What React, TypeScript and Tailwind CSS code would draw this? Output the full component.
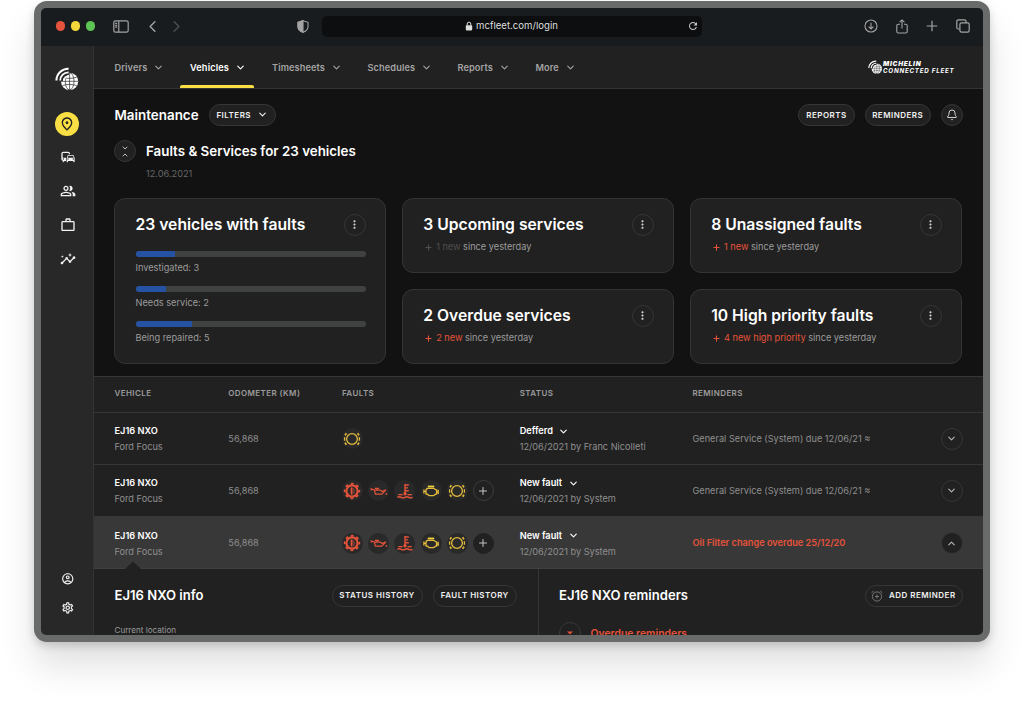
import React from "react";
import {
  ChevronDown,
  ChevronLeft,
  ChevronRight,
  ChevronUp,
  Plus,
  Bell,
} from "lucide-react";
import {
  MdOutlineCommute,
  MdOutlinePeopleAlt,
  MdWorkOutline,
  MdInsights,
  MdOutlineAccountCircle,
  MdOutlineSettings,
  MdOutlinePlace,
  MdMoreVert,
  MdRefresh,
} from "react-icons/md";

type FaultKind = "brake" | "oil" | "temp" | "engine" | "pads";

interface VehicleRow {
  plate: string;
  model: string;
  odometer: string;
  faults: FaultKind[];
  status: string;
  statusBy: string;
  reminder: string;
  active?: boolean;
}

const NAV_ITEMS = [
  { label: "Drivers", width: "w-[75.5px]" },
  { label: "Vehicles", width: "w-[82px]", active: true },
  { label: "Timesheets", width: "w-[95.5px]" },
  { label: "Schedules", width: "w-[90px]" },
  { label: "Reports", width: "w-[78px]" },
  { label: "More", width: "w-[60px]" },
];

const PROGRESS = [
  { label: "Investigated: 3", width: 39.5 },
  { label: "Needs service: 2", width: 30 },
  { label: "Being repaired: 5", width: 56.5 },
];

const ALL_FAULTS: FaultKind[] = ["brake", "oil", "temp", "engine", "pads"];

const ROWS: VehicleRow[] = [
  {
    plate: "EJ16 NXO",
    model: "Ford Focus",
    odometer: "56,868",
    faults: ["pads"],
    status: "Defferd",
    statusBy: "12/06/2021 by Franc Nicolleti",
    reminder: "General Service (System) due 12/06/21 ≈",
  },
  {
    plate: "EJ16 NXO",
    model: "Ford Focus",
    odometer: "56,868",
    faults: ALL_FAULTS,
    status: "New fault",
    statusBy: "12/06/2021 by System",
    reminder: "General Service (System) due 12/06/21 ≈",
  },
  {
    plate: "EJ16 NXO",
    model: "Ford Focus",
    odometer: "56,868",
    faults: ALL_FAULTS,
    status: "New fault",
    statusBy: "12/06/2021 by System",
    reminder: "Oil Filter change overdue 25/12/20",
    active: true,
  },
];

function FleetLogo({ className, hole }: { className: string; hole: string }) {
  return (
    <svg viewBox="0 0 24 24" className={className} fill="none">
      <circle cx="14.6" cy="14.3" r="8.6" fill="#fff" />
      <g stroke={hole} strokeWidth="0.7">
        <ellipse cx="14.6" cy="14.3" rx="4.4" ry="8.6" />
        <path d="M14.6 5.7v17.2M6 14.3h17.2M7.5 10.2c4 1.6 10.2 1.6 14.2 0M7.5 18.6c4-1.6 10.2-1.6 14.2 0" />
      </g>
      <path d="M5.6 14.3A8.6 8.6 0 0 1 13.8 5.6" stroke={hole} strokeWidth="4.6" />
      <path d="M1.4 13.4A11.8 11.8 0 0 1 13.6 1.8" stroke="#fff" strokeWidth="2" />
      <path d="M5.2 13.6A8.2 8.2 0 0 1 13.6 5.4" stroke="#fff" strokeWidth="1.8" />
      <path d="M9 13.8A4.6 4.6 0 0 1 13.6 9.2" stroke="#fff" strokeWidth="1.6" />
    </svg>
  );
}

function FaultIcon({ kind }: { kind: FaultKind }) {
  const red = "#e4533a";
  const yellow = "#e3bb3d";
  if (kind === "brake") {
    return (
      <svg viewBox="0 0 18 18" className="h-[18px] w-[18px]" fill="none" stroke={red}>
        <circle cx="9" cy="9" r="5.6" strokeWidth="2.1" />
        <circle cx="9" cy="9" r="7.3" strokeWidth="1.8" strokeDasharray="2.8 2.933" strokeDashoffset="1.4" />
        <path d="M8.6 5.5v7" strokeWidth="1.8" />
        <path d="M10 6.4c.9.4 1 1 1 1.600v2c0 .6-.1 1.200-1 1.600" strokeWidth="0.7" />
      </svg>
    );
  }
  if (kind === "oil") {
    return (
      <svg viewBox="0 0 18 18" className="h-[18px] w-[18px]" fill="none" stroke={red} strokeWidth="1.2">
        <path d="M1.2 8.400V6.800l3.200 1.300M4.400 8.100h6l1.600 1.400 4-1.700-4.200 4.400H5.400z" />
        <path d="M4.800 6.400h4.200M7 6.400v1.700" />
        <path d="M16.400 11.200v1.600" strokeWidth="1.500" />
      </svg>
    );
  }
  if (kind === "temp") {
    return (
      <svg viewBox="0 0 18 18" className="h-[18px] w-[18px]" fill="none" stroke={red} strokeWidth="1.400">
        <path d="M9 2v9.500M9 3h3.800M9 5.900h3M9 8.800h3.800" />
        <circle cx="9" cy="11.800" r="1.700" fill={red} stroke="none" />
        <path d="M2.200 12.600h3.300l1 .5M11.500 13.100l1-.5h3.300M1.400 15.300c1.200-.8 2.500-.8 3.800 0s2.500.8 3.800 0 2.500-.8 3.800 0 2.600.8 3.800 0" />
      </svg>
    );
  }
  if (kind === "engine") {
    return (
      <svg viewBox="0 0 18 18" className="h-[18px] w-[18px]" fill="none" stroke={yellow} strokeWidth="1.300">
        <path d="M5.800 4.500h6.400" stroke="#f5d73b" strokeWidth="1.800" />
        <path d="M5.400 6.300h6.200l2.200 1.500h.8v4.400h-1.200L11.800 13.600H7L5.200 12H4V7.800z" strokeLinejoin="round" />
        <path d="M1.900 7.400v4M16.200 7.800v4.200M2 9.400h2M14.400 10h1.600" />
      </svg>
    );
  }
  return (
    <svg viewBox="0 0 18 18" className="h-[18px] w-[18px]" fill="none" stroke={yellow}>
      <circle cx="9" cy="9" r="5.400" strokeWidth="1.300" />
      <path
        d="M3.400 3.300L2 5.400M3.400 14.700L2 12.600M14.600 3.300L16 5.400M14.600 14.700l1.400-2.100"
        strokeWidth="1.700"
      />
      <path d="M1.600 7.300v3.400M16.400 7.300v3.400" strokeWidth="1.300" />
    </svg>
  );
}

function Pill({ children, className = "" }: { children: React.ReactNode; className?: string }) {
  return (
    <button
      type="button"
      className={`flex h-[22px] shrink-0 items-center justify-center rounded-full border border-[#363636] bg-[#212121] pb-[1px] text-[8px] font-semibold tracking-[0.06em] whitespace-nowrap text-[#f0f0f0] ${className}`}
    >
      {children}
    </button>
  );
}

function RoundButton({ children, className = "" }: { children: React.ReactNode; className?: string }) {
  return (
    <button
      type="button"
      className={`flex h-[22px] w-[22px] shrink-0 items-center justify-center rounded-full border border-[#363636] ${className}`}
    >
      {children}
    </button>
  );
}

function BrowserBar() {
  return (
    <div className="flex h-[38px] shrink-0 items-center bg-[#181c1f] pb-[2px] pl-[14.500px] text-[#a3a3a3]">
      <div className="flex w-[57px] gap-[5.500px]">
        <span className="h-[9.500px] w-[9.500px] rounded-full bg-[#e5533d]" />
        <span className="h-[9.500px] w-[9.500px] rounded-full bg-[#f5d73b]" />
        <span className="h-[9.500px] w-[9.500px] rounded-full bg-[#5dc553]" />
      </div>
      <svg viewBox="0 0 16 13" className="h-[13px] w-4" fill="none" stroke="currentColor" strokeWidth="1.200">
        <rect x="0.800" y="0.800" width="14.400" height="11.400" rx="1.800" />
        <path d="M5.800 1v11M2.200 3.400h2M2.200 5.300h2M2.200 7.200h2" />
      </svg>
      <ChevronLeft className="ml-[14.500px] h-[19px] w-[19px]" strokeWidth={1.800} />
      <ChevronRight className="ml-[5px] h-[19px] w-[19px] text-[#4c4f51]" strokeWidth={1.800} />
      <svg viewBox="0 0 12 13" className="ml-[111px] h-[13px] w-3" fill="none" stroke="currentColor" strokeWidth="1.100">
        <path d="M6 .7l5 1.600v4.400c0 2.600-2 4.400-5 5.600-3-1.200-5-3-5-5.600V2.300z" />
        <path d="M6 .7v11.600c-3-1.200-5-3-5-5.600V2.300z" fill="currentColor" />
      </svg>
      <div className="ml-[13px] flex h-[21px] w-[380px] items-center rounded-[5px] bg-[#0c0e0f]">
        <svg viewBox="0 0 8 10" className="ml-[143px] h-[10px] w-2 text-[#dedede]" fill="none">
          <rect x="0.800" y="4.200" width="6.400" height="5.200" rx="0.800" fill="currentColor" />
          <path d="M2.200 4.500V3a1.800 1.800 0 0 1 3.600 0v1.500" stroke="currentColor" strokeWidth="1" />
        </svg>
        <span className="ml-[3px] w-[211px] text-[9.600px] text-[#dedede]">mcfleet.com/login</span>
        <MdRefresh className="h-[12px] w-[12px] text-[#c9c9c9]" />
      </div>
      <svg viewBox="0 0 14 14" className="ml-[162px] h-[14px] w-[14px]" fill="none" stroke="currentColor" strokeWidth="1.100">
        <circle cx="7" cy="7" r="6" />
        <path d="M7 3.800v6M4.600 7.600L7 10l2.400-2.400" />
      </svg>
      <svg viewBox="0 0 12 15" className="ml-[17.500px] h-[15px] w-3" fill="none" stroke="currentColor" strokeWidth="1.100">
        <path d="M4 5.300H2.200A1.400 1.400 0 0 0 .8 6.700v5.900A1.400 1.400 0 0 0 2.200 14h7.600a1.400 1.400 0 0 0 1.400-1.400V6.700a1.400 1.400 0 0 0-1.400-1.400H8M6 9.500V1M3.600 3.200L6 .9l2.400 2.300" />
      </svg>
      <svg viewBox="0 0 12 12" className="ml-[18.500px] h-3 w-3" stroke="currentColor" strokeWidth="1.200">
        <path d="M6 .8v10.400M.8 6h10.400" />
      </svg>
      <svg viewBox="0 0 14 14" className="ml-[17.500px] h-[14px] w-[14px]" fill="none" stroke="currentColor" strokeWidth="1.200">
        <rect x="3.900" y="3.900" width="9.300" height="9.300" rx="1.600" />
        <path d="M3.700 10H2.300A1.500 1.500 0 0 1 .8 8.500V2.300A1.500 1.500 0 0 1 2.300.8h6.200A1.500 1.500 0 0 1 10 2.300v1.400" />
      </svg>
    </div>
  );
}

function Sidebar() {
  return (
    <aside className="flex w-[53px] shrink-0 flex-col items-center border-r border-[#343434] bg-[#282828] text-[#f2f2f2]">
      <FleetLogo className="mt-[21px] h-6 w-6" hole="#282828" />
      <div className="mt-[20.500px] flex h-6 w-6 items-center justify-center rounded-full bg-[#f9df43] text-[#212121]">
        <MdOutlinePlace className="h-[16px] w-[16px]" />
      </div>
      <nav className="mt-[13.500px] ml-[1px] flex flex-col gap-[18px]">
        <MdOutlineCommute className="h-4 w-4" />
        <MdOutlinePeopleAlt className="h-4 w-4" />
        <MdWorkOutline className="h-4 w-4" />
        <MdInsights className="h-4 w-4" />
      </nav>
      <div className="mt-auto mb-[21px] ml-[1px] flex flex-col gap-[15.500px]">
        <MdOutlineAccountCircle className="h-[13.500px] w-[13.500px]" />
        <MdOutlineSettings className="h-[13.500px] w-[13.500px]" />
      </div>
    </aside>
  );
}

function TopNav() {
  return (
    <header className="flex h-[43px] shrink-0 items-stretch justify-between border-b border-[#343434] bg-[#212121] pl-[20.500px]">
      <nav className="flex">
        {NAV_ITEMS.map((item) => (
          <div
            key={item.label}
            className={`relative flex shrink-0 items-center pt-[1.500px] ${item.width} ${
              item.active ? "text-white" : "text-[#a3a3a3]"
            }`}
          >
            <span
              className={`text-[9.200px] font-semibold ${item.active ? "tracking-[0.015em]" : "tracking-[0.012em]"}`}
            >
              {item.label}
            </span>
            <ChevronDown className="ml-[6px] h-[11px] w-[11px]" strokeWidth={2.400} />
            {item.active && (
              <span className="absolute -left-[10.500px] bottom-0 h-[3px] w-[74px] rounded-t-[2px] bg-[#f9df43]" />
            )}
          </div>
        ))}
      </nav>
      <div className="mr-[27px] flex items-center gap-[1px] pt-[1px]">
        <FleetLogo className="h-[14.500px] w-[14.500px]" hole="#212121" />
        <div className="w-[73px] text-white italic">
          <p className="text-[6.500px] leading-[6.500px] font-black tracking-[0.115em]">MICHELIN</p>
          <p className="text-[6.200px] leading-[6.500px] font-bold tracking-[0.125em] whitespace-nowrap">CONNECTED FLEET</p>
        </div>
      </div>
    </header>
  );
}

function CardTitle({ children }: { children: React.ReactNode }) {
  return (
    <div className="flex items-center justify-between">
      <h3 className="text-[15.700px] leading-[22px] font-semibold text-white">{children}</h3>
      <RoundButton className="text-[#d0d0d0]">
        <MdMoreVert className="h-[13px] w-[13px]" />
      </RoundButton>
    </div>
  );
}

function StatCard({ title, change, muted }: { title: string; change: string; muted?: boolean }) {
  return (
    <section className="h-[75.500px] rounded-[11px] border border-[#343434] bg-[#212121] pt-[15px] pr-[19.500px] pl-[20.500px]">
      <CardTitle>{title}</CardTitle>
      <p className="mt-[4.500px] flex items-center text-[9.200px] leading-[14px] text-[#9b9b9b]">
        <span className={`flex items-center ${muted ? "text-[#4f4f4f]" : "text-[#e4533a]"}`}>
          <Plus className="mr-[3px] ml-[0.800px] h-[9px] w-[9px]" strokeWidth={2.800} />
          {change}
        </span>
        <span className="ml-[2.500px]">since yesterday</span>
      </p>
    </section>
  );
}

function Summary() {
  return (
    <section className="h-[287px] shrink-0 bg-[#121212] pt-[15px] pr-[21px] pl-5">
      <div className="-mr-[0.700px] flex items-center">
        <h1 className="w-[95px] pl-[0.500px] text-[13.400px] font-semibold text-white">Maintenance</h1>
        <Pill className="w-[66.500px] gap-[6px]">
          FILTERS
          <ChevronDown className="h-[11px] w-[11px]" strokeWidth={2.500} />
        </Pill>
        <div className="ml-auto flex gap-[10px]">
          <Pill className="w-[56.500px]">REPORTS</Pill>
          <Pill className="w-[66px]">REMINDERS</Pill>
          <RoundButton className="bg-[#212121] text-[#d0d0d0]">
            <Bell className="h-[12px] w-[12px]" strokeWidth={2} />
          </RoundButton>
        </div>
      </div>
      <div className="mt-[14px] flex">
        <RoundButton className="flex-col bg-[#212121] text-[#bdbdbd]">
          <ChevronDown className="-mb-px h-[8px] w-[8px]" strokeWidth={3} />
          <ChevronUp className="h-[8px] w-[8px]" strokeWidth={3} />
        </RoundButton>
        <div className="ml-[10px]">
          <h2 className="text-[13.350px] leading-[22px] font-semibold text-white">Faults &amp; Services for 23 vehicles</h2>
          <p className="mt-[4.500px] text-[9.200px] leading-[14px] text-[#666]">12.06.2021</p>
        </div>
      </div>
      <div className="mt-[17px] grid grid-cols-3 grid-rows-2 gap-x-[15.500px] gap-y-[15.500px]">
        <section className="row-span-2 rounded-[11px] border border-[#343434] bg-[#212121] pt-[15px] pr-[19.500px] pl-[20.500px]">
          <CardTitle>23 vehicles with faults</CardTitle>
          <div className="mt-[15.500px] flex flex-col gap-[10px]">
            {PROGRESS.map((bar) => (
              <div key={bar.label} className="h-[25.200px]">
                <div className="h-[5.500px] overflow-hidden rounded-full bg-[#404141]">
                  <div className="h-full bg-[#2552a3]" style={{ width: bar.width }} />
                </div>
                <p className="mt-[4px] text-[9.200px] leading-[14px] text-[#9b9b9b]">{bar.label}</p>
              </div>
            ))}
          </div>
        </section>
        <StatCard title="3 Upcoming services" change="1 new" muted />
        <StatCard title="8 Unassigned faults" change="1 new" />
        <StatCard title="2 Overdue services" change="2 new" />
        <StatCard title="10 High priority faults" change="4 new high priority" />
      </div>
    </section>
  );
}

function VehicleTable() {
  const columns = "grid grid-cols-[113.800px_113.700px_177.700px_172.800px_1fr_22px] pl-[20.500px] pr-[20.500px]";
  return (
    <section className="shrink-0 bg-[#212121]">
      <div
        className={`${columns} h-[36.500px] items-center border-y border-[#363636] pb-[2px] text-[8px] font-semibold tracking-[0.05em] text-[#9b9b9b]`}
      >
        <span>VEHICLE</span>
        <span>ODOMETER (KM)</span>
        <span>FAULTS</span>
        <span>STATUS</span>
        <span>REMINDERS</span>
      </div>
      {ROWS.map((row, i) => (
        <div
          key={i}
          className={`${columns} relative h-[52.300px] items-center border-b pt-[1px] text-[9.200px] text-[#8f8f8f] ${
            row.active ? "border-[#404040] bg-[#383838]" : "border-[#363636]"
          }`}
        >
          <div className="pt-[1px] leading-[16px]">
            <p className="font-semibold text-white">{row.plate}</p>
            <p>{row.model}</p>
          </div>
          <span>{row.odometer}</span>
          <div className="flex gap-[5.200px]">
            {row.faults.map((fault) => (
              <span key={fault} className="flex h-[21px] w-[21px] items-center justify-center rounded-full bg-[#292929]">
                <FaultIcon kind={fault} />
              </span>
            ))}
            {row.faults.length > 1 && (
              <span
                className={`flex h-[21px] w-[21px] items-center justify-center rounded-full border text-[#c4c4c4] ${
                  row.active ? "border-[#212121] bg-[#212121]" : "border-[#3d3d3d]"
                }`}
              >
                <Plus className="h-[12px] w-[12px]" strokeWidth={2} />
              </span>
            )}
          </div>
          <div className="pt-[1px] leading-[16px]">
            <p className="flex items-center font-semibold text-white">
              {row.status}
              <ChevronDown className="ml-[5.500px] h-[11px] w-[11px]" strokeWidth={2.500} />
            </p>
            <p>{row.statusBy}</p>
          </div>
          <span className={row.active ? "font-semibold text-[#e4533a]" : ""}>{row.reminder}</span>
          <RoundButton className={row.active ? "border-[#212121] bg-[#212121] text-[#b5b5b5]" : "text-[#b5b5b5]"}>
            {row.active ? (
              <ChevronUp className="h-[11px] w-[11px]" strokeWidth={2.400} />
            ) : (
              <ChevronDown className="h-[11px] w-[11px]" strokeWidth={2.400} />
            )}
          </RoundButton>
          {row.active && (
            <svg viewBox="0 0 16 8" className="absolute -bottom-px left-[31px] h-2 w-4">
              <path d="M0 8l8-7.500L16 8z" fill="#212121" />
            </svg>
          )}
        </div>
      ))}
    </section>
  );
}

function VehicleDetails() {
  return (
    <section className="flex flex-1 bg-[#212121]">
      <div className="w-[444.500px] shrink-0 border-r border-[#363636] pt-[15.500px] pr-[20.500px] pl-[20.500px]">
        <div className="flex items-center gap-[10px]">
          <h2 className="mr-auto text-[13.100px] font-semibold text-white">EJ16 NXO info</h2>
          <Pill className="w-[91px]">STATUS HISTORY</Pill>
          <Pill className="w-[84.500px]">FAULT HISTORY</Pill>
        </div>
        <p className="mt-[16px] text-[8.100px] leading-[14px] text-[#9b9b9b]">Current location</p>
      </div>
      <div className="flex-1 pt-[15.500px] pr-[20.500px] pl-5">
        <div className="flex items-center justify-between">
          <h2 className="pl-[0.500px] text-[13.100px] font-semibold text-white">EJ16 NXO reminders</h2>
          <Pill className="w-[98px] gap-[5.500px]">
            <svg viewBox="0 0 12 12" className="mt-[1px] h-3 w-3 text-[#757575]" fill="none" stroke="currentColor" strokeWidth="1">
              <circle cx="6" cy="6.500" r="4.600" />
              <path d="M6 4.500v4M4 6.500h4M.6 2.800L2.800 1M11.400 2.800L9.200 1" />
            </svg>
            ADD REMINDER
          </Pill>
        </div>
        <div className="mt-[15.500px] flex items-center">
          <RoundButton>
            <svg viewBox="0 0 6 4" className="h-1 w-1.5">
              <path d="M0 .5h6L3 3.500z" fill="#e4533a" />
            </svg>
          </RoundButton>
          <span className="ml-[10px] text-[10.400px] font-semibold text-[#e4533a]">Overdue reminders</span>
        </div>
      </div>
    </section>
  );
}

export default function App() {
  return (
    <div className="h-[720px] w-[1024px] overflow-hidden bg-white pt-px pl-[34px] font-['Inter','Liberation_Sans',sans-serif]">
      <div className="h-[641px] w-[956px] rounded-[13px] border-[7px] border-[#696a6a] bg-[#696a6a] shadow-[0_4px_8px_rgba(0,0,0,0.16),0_24px_36px_rgba(0,0,0,0.12)]">
        <div className="flex h-full flex-col overflow-hidden rounded-[5px]">
          <BrowserBar />
          <div className="flex min-h-0 flex-1">
            <Sidebar />
            <main className="flex min-w-0 flex-1 flex-col overflow-hidden">
              <TopNav />
              <Summary />
              <VehicleTable />
              <VehicleDetails />
            </main>
          </div>
        </div>
      </div>
    </div>
  );
}
